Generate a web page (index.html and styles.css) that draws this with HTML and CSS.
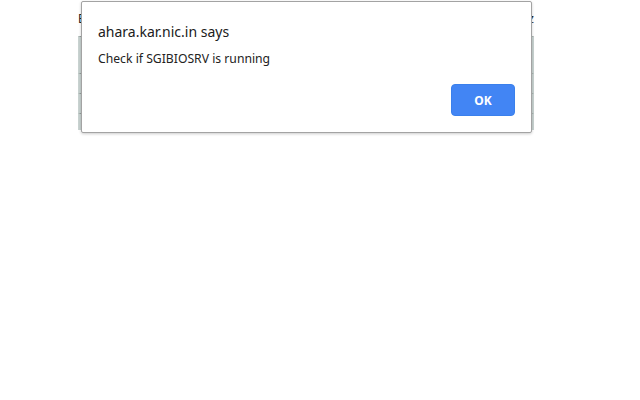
FILE: index.html
```html
<!DOCTYPE html>
<html>
<head>
<meta charset="utf-8">
<link rel="stylesheet" href="styles.css">
</head>
<body>
<div class="page">
  <div class="bg-table">
    <div class="bg-head"><span>E</span><span>z</span></div>
    <div class="bg-row r1"></div>
    <div class="bg-row r2"></div>
    <div class="bg-row r3"></div>
    <div class="bg-row r4"></div>
  </div>
  <div class="dialog">
    <div class="title">ahara.kar.nic.in says</div>
    <div class="message">Check if SGIBIOSRV is running</div>
    <div class="actions"><button class="ok">OK</button></div>
  </div>
</div>
</body>
</html>
```
FILE: styles.css
```css
html, body {
  margin: 0;
  padding: 0;
  background: #fff;
  width: 640px;
  height: 400px;
  overflow: hidden;
  font-family: "Noto Sans", "Open Sans", sans-serif;
}
.page {
  position: relative;
  width: 640px;
  height: 400px;
}
.bg-table {
  margin-left: 78px;
  width: 456px;
  padding-top: 10px;
}
.bg-head {
  display: flex;
  justify-content: space-between;
  font-size: 12px;
  color: #222;
  height: 18px;
  line-height: 18px;
}
.bg-row {
  border-left: 3px solid #c9d3d1;
  border-right: 3px solid #c9d3d1;
  border-top: 1px solid #8a9490;
}
.r1 { height: 36px; margin-top: 8px; }
.r2 { height: 19px; }
.r3 { height: 19px; }
.r4 { height: 16px; }
.dialog {
  position: absolute;
  left: 81px;
  top: 1px;
  width: 449px;
  height: 130px;
  background: #fff;
  border: 1px solid #a3a3a3;
  border-radius: 2px;
  box-shadow: 0 1px 3px rgba(0,0,0,0.2);
}
.title {
  margin: 20px 0 0 16px;
  font-size: 14px;
  color: #202020;
  line-height: 20px;
}
.message {
  margin: 9px 0 0 16px;
  font-size: 12.2px;
  color: #222;
  line-height: 16px;
}
.actions {
  display: flex;
  justify-content: flex-end;
  margin: 17px 16px 0 0;
}
.ok {
  width: 64px;
  height: 32px;
  border: 1px solid #3a80ec;
  border-radius: 4px;
  background: #4285f4;
  color: #fff;
  font-family: "Noto Sans", sans-serif;
  font-weight: bold;
  font-size: 12px;
  padding: 0;
}
```
